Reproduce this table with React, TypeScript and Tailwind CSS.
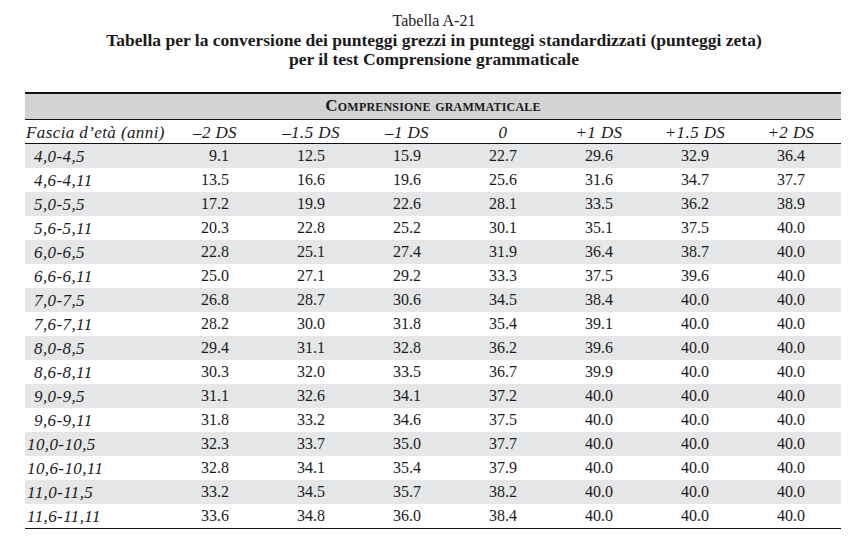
const rows: [string, string[]][] = [
  ["4,0-4,5", ["9.1", "12.5", "15.9", "22.7", "29.6", "32.9", "36.4"]],
  ["4,6-4,11", ["13.5", "16.6", "19.6", "25.6", "31.6", "34.7", "37.7"]],
  ["5,0-5,5", ["17.2", "19.9", "22.6", "28.1", "33.5", "36.2", "38.9"]],
  ["5,6-5,11", ["20.3", "22.8", "25.2", "30.1", "35.1", "37.5", "40.0"]],
  ["6,0-6,5", ["22.8", "25.1", "27.4", "31.9", "36.4", "38.7", "40.0"]],
  ["6,6-6,11", ["25.0", "27.1", "29.2", "33.3", "37.5", "39.6", "40.0"]],
  ["7,0-7,5", ["26.8", "28.7", "30.6", "34.5", "38.4", "40.0", "40.0"]],
  ["7,6-7,11", ["28.2", "30.0", "31.8", "35.4", "39.1", "40.0", "40.0"]],
  ["8,0-8,5", ["29.4", "31.1", "32.8", "36.2", "39.6", "40.0", "40.0"]],
  ["8,6-8,11", ["30.3", "32.0", "33.5", "36.7", "39.9", "40.0", "40.0"]],
  ["9,0-9,5", ["31.1", "32.6", "34.1", "37.2", "40.0", "40.0", "40.0"]],
  ["9,6-9,11", ["31.8", "33.2", "34.6", "37.5", "40.0", "40.0", "40.0"]],
  ["10,0-10,5", ["32.3", "33.7", "35.0", "37.7", "40.0", "40.0", "40.0"]],
  ["10,6-10,11", ["32.8", "34.1", "35.4", "37.9", "40.0", "40.0", "40.0"]],
  ["11,0-11,5", ["33.2", "34.5", "35.7", "38.2", "40.0", "40.0", "40.0"]],
  ["11,6-11,11", ["33.6", "34.8", "36.0", "38.4", "40.0", "40.0", "40.0"]],
];

const heads = ["–2 DS", "–1.5 DS", "–1 DS", "0", "+1 DS", "+1.5 DS", "+2 DS"];

export default function App() {
  return (
    <div className="w-[868px] h-[543px] bg-white text-[#1a1a1a] font-['Liberation_Serif',serif] overflow-hidden">
      {/* titolo */}
      <div className="pt-[11px] text-center leading-[19.5px]">
        <div className="text-[16px]">Tabella A-21</div>
        <div className="font-bold text-[17.5px]">
          Tabella per la conversione dei punteggi grezzi in punteggi standardizzati (punteggi zeta)
        </div>
        <div className="font-bold text-[17.5px]">per il test Comprensione grammaticale</div>
      </div>

      <div className="ml-[25px] mt-[22px] w-[816px] border-t-2 border-b border-[#111]">
        <div className="h-[26px] bg-[#d3d3d3] border-b border-[#111] flex items-center justify-center text-[17px] font-bold [font-variant:small-caps] tracking-[0.2px]">
          Comprensione grammaticale
        </div>
        <div className="grid grid-cols-[142px_repeat(7,96px)_1fr] h-[24px] items-center border-b border-[#111] italic text-[17px] tracking-[0.4px]">
          <div className="pl-px">Fascia d’età (anni)</div>
          {heads.map((h) => (
            <div key={h} className="text-center">
              {h}
            </div>
          ))}
          <div />
        </div>
        {rows.map(([age, vals], i) => (
          <div
            key={age}
            className={`grid grid-cols-[142px_repeat(7,96px)_1fr] h-[24px] items-center text-[16px] ${
              i % 2 === 0 ? "bg-[#e5e6e7]" : "bg-white"
            }`}
          >
            <div
              className={`italic text-[17px] tracking-[0.4px] ${
                age.startsWith("1") ? "pl-[2px]" : "pl-[9px]"
              }`}
            >
              {age}
            </div>
            {vals.map((v, j) => (
              <div key={j} className="text-center tabular-nums">
                {v.length === 3 ? "\u2007" + v : v}
              </div>
            ))}
            <div />
          </div>
        ))}
      </div>
    </div>
  );
}
